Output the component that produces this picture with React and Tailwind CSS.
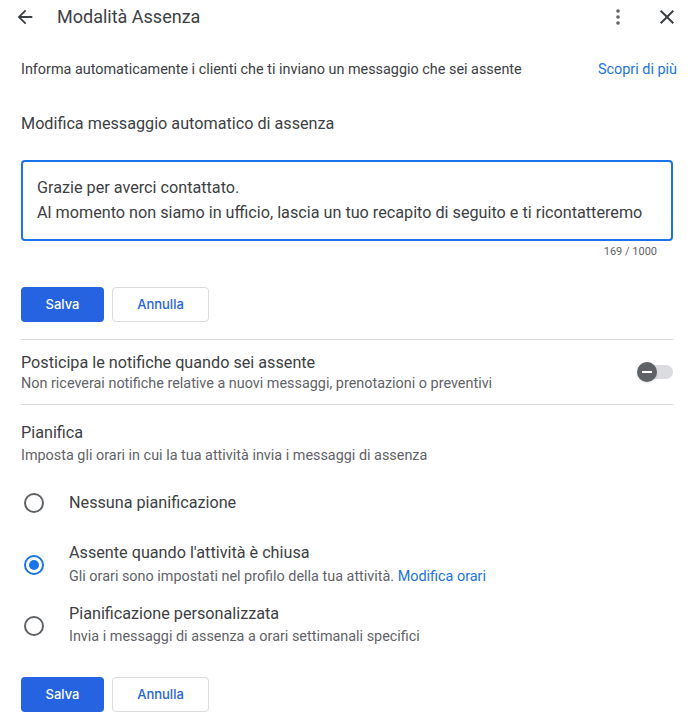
import React from "react";

function Radio({ checked }) {
  return (
    <div className="w-[40px] flex justify-center shrink-0">
      {checked ? (
        <div className="w-[20px] h-[20px] rounded-full border-2 border-[#1a73e8] flex items-center justify-center">
          <div className="w-[10px] h-[10px] rounded-full bg-[#1a73e8]" />
        </div>
      ) : (
        <div className="w-[20px] h-[20px] rounded-full border-2 border-[#5f6368]" />
      )}
    </div>
  );
}

function Buttons() {
  return (
    <div className="flex gap-2">
      <button className="w-[83px] h-[35px] rounded-[4px] bg-[#2563e0] text-white text-[13px] font-medium font-['Inter',sans-serif]">
        Salva
      </button>
      <button className="w-[97px] h-[35px] rounded-[4px] border border-[#dadce0] bg-white text-[#2563e0] text-[13px] font-medium font-['Inter',sans-serif]">
        Annulla
      </button>
    </div>
  );
}

export default function App() {
  return (
    <div className="w-[696px] h-[722px] bg-white font-['Roboto',sans-serif] text-[#3c4043] overflow-hidden">
      {/* Header */}
      <div className="h-[33px] flex items-center pl-[14px] pr-[17px]">
        <svg width="22" height="22" viewBox="0 0 24 24" className="text-[#3c4043]">
          <path d="M20 11H7.83l5.59-5.59L12 4l-8 8 8 8 1.41-1.41L7.83 13H20v-2z" fill="currentColor" />
        </svg>
        <div className="ml-[21px] text-[18px] text-[#3c4043]">Modalità Assenza</div>
        <div className="flex-1" />
        <svg width="24" height="24" viewBox="0 0 24 24" className="text-[#5f6368]">
          <circle cx="12" cy="6" r="1.8" fill="currentColor" />
          <circle cx="12" cy="12" r="1.8" fill="currentColor" />
          <circle cx="12" cy="18" r="1.8" fill="currentColor" />
        </svg>
        <svg width="24" height="24" viewBox="0 0 24 24" className="ml-[25px] text-[#3c4043]">
          <path d="M19 6.41L17.59 5 12 10.59 6.41 5 5 6.41 10.59 12 5 17.59 6.41 19 12 13.41 17.59 19 19 17.59 13.41 12z" fill="currentColor" />
        </svg>
      </div>

      <div className="px-[21px]">
        <div className="mt-[28px] w-[656px] flex justify-between items-center text-[14.4px] leading-[18px]">
          <span className="text-[#3c4043]">Informa automaticamente i clienti che ti inviano un messaggio che sei assente</span>
          <span className="text-[#1a73e8]">Scopri di più</span>
        </div>

        <div className="mt-[35px] text-[16.2px] leading-[20px]">Modifica messaggio automatico di assenza</div>

        <div className="mt-[26px] w-[652px] h-[81px] rounded-[4px] border-2 border-[#1a73e8] px-[14px] pt-[13px] text-[16.2px] leading-[25px] text-[#3c4043]">
          <div>Grazie per averci contattato.</div>
          <div>Al momento non siamo in ufficio, lascia un tuo recapito di seguito e ti ricontatteremo</div>
        </div>
        <div className="w-[636px] text-right text-[11px] leading-[14px] text-[#5f6368] mt-[4px]">169 / 1000</div>

        <div className="mt-[28px]">
          <Buttons />
        </div>

        <div className="mt-[17px] w-[652px] border-t border-[#dadce0]" />

        <div className="w-[652px] flex items-center pt-[13px] pb-[10px]">
          <div className="flex-1">
            <div className="text-[16.2px] leading-[20px]">Posticipa le notifiche quando sei assente</div>
            <div className="mt-[1px] text-[14.4px] leading-[20px] text-[#5f6368]">Non riceverai notifiche relative a nuovi messaggi, prenotazioni o preventivi</div>
          </div>
          <div className="relative w-[36px] h-[14px] mt-[-4px]">
            <div className="absolute left-[3px] top-0 w-[33px] h-[14px] rounded-full bg-[#dadce0]" />
            <div className="absolute left-0 top-[-3px] w-[20px] h-[20px] rounded-full bg-[#5f6368] shadow flex items-center justify-center">
              <div className="w-[10px] h-[2px] bg-white" />
            </div>
          </div>
        </div>

        <div className="w-[652px] border-t border-[#dadce0]" />

        <div className="mt-[18px] text-[16.2px] leading-[20px]">Pianifica</div>
        <div className="mt-[3px] text-[14.4px] leading-[20px] text-[#5f6368]">Imposta gli orari in cui la tua attività invia i messaggi di assenza</div>

        <div className="mt-[27px] flex items-center -ml-[7px]">
          <Radio />
          <div className="ml-[15px] text-[16.2px] leading-[20px] -mt-[1px]">Nessuna pianificazione</div>
        </div>

        <div className="mt-[30px] flex items-center -ml-[7px]">
          <Radio checked />
          <div className="ml-[15px]">
            <div className="text-[16.2px] leading-[20px]">Assente quando l'attività è chiusa</div>
            <div className="mt-[4px] text-[14.4px] leading-[20px] text-[#5f6368]">
              Gli orari sono impostati nel profilo della tua attività. <span className="text-[#1a73e8]">Modifica orari</span>
            </div>
          </div>
        </div>

        <div className="mt-[17px] flex items-center -ml-[7px]">
          <Radio />
          <div className="ml-[15px]">
            <div className="text-[16.2px] leading-[20px]">Pianificazione personalizzata</div>
            <div className="mt-[3px] text-[14.4px] leading-[20px] text-[#5f6368]">Invia i messaggi di assenza a orari settimanali specifici</div>
          </div>
        </div>

        <div className="mt-[30px]">
          <Buttons />
        </div>
      </div>
    </div>
  );
}
